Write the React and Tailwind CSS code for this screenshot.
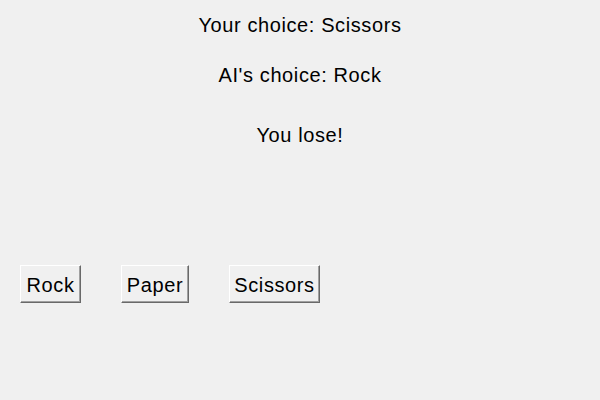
import React, { useState } from 'react'

const font = { fontFamily: '"Liberation Sans", Arial, sans-serif' }

function TkButton({ label, width, onClick }) {
  return (
    <button
      onClick={onClick}
      className={`h-[38px] ${width} bg-[#f0f0f0] text-black text-[20px] leading-[24px] tracking-[0.6px] border border-t-white border-l-white border-b-[#696969] border-r-[#696969] shadow-[inset_-1px_-1px_0_#a0a0a0] flex items-center justify-center pt-[1px]`}
    >
      {label}
    </button>
  )
}

export default function App() {
  const [you] = useState('Scissors')
  const [ai] = useState('Rock')

  return (
    <div className="w-[600px] h-[400px] bg-[#f0f0f0] text-black flex flex-col" style={font}>
      <div className="pt-[13px] text-center text-[20px] leading-[24px] tracking-[0.6px]">Your choice: {you}</div>
      <div className="mt-[26px] text-center text-[20px] leading-[24px] tracking-[0.6px]">AI's choice: {ai}</div>
      <div className="mt-[36px] text-center text-[20px] leading-[24px] tracking-[0.6px]">You lose!</div>
      <div className="mt-[118px] ml-[20px] flex gap-[40px]">
        <TkButton label="Rock" width="w-[61px]" />
        <TkButton label="Paper" width="w-[68px]" />
        <TkButton label="Scissors" width="w-[91px]" />
      </div>
    </div>
  )
}
